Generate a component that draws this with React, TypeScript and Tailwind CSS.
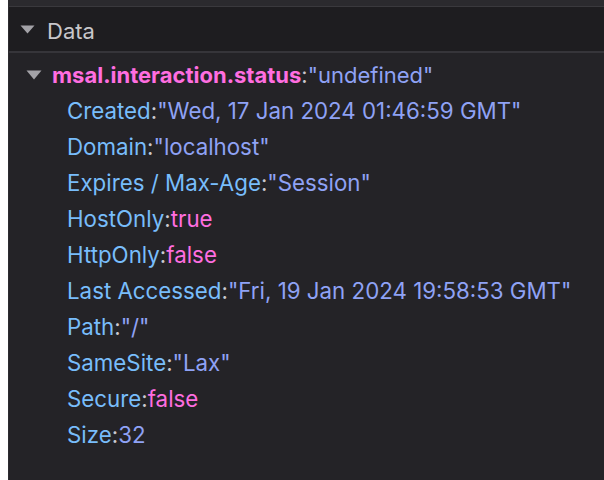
import React from 'react';

type Row = { k: string; v: string; kind: 'str' | 'bool' | 'num' };

const ROWS: Row[] = [
    { k: 'Created', v: '"Wed, 17 Jan 2024 01:46:59 GMT"', kind: 'str' },
    { k: 'Domain', v: '"localhost"', kind: 'str' },
    { k: 'Expires / Max-Age', v: '"Session"', kind: 'str' },
    { k: 'HostOnly', v: 'true', kind: 'bool' },
    { k: 'HttpOnly', v: 'false', kind: 'bool' },
    { k: 'Last Accessed', v: '"Fri, 19 Jan 2024 19:58:53 GMT"', kind: 'str' },
    { k: 'Path', v: '"/"', kind: 'str' },
    { k: 'SameSite', v: '"Lax"', kind: 'str' },
    { k: 'Secure', v: 'false', kind: 'bool' },
    { k: 'Size', v: '32', kind: 'num' },
];

function Caret({ color, w, h }: { color: string; w: number; h: number }) {
    return (
        <svg width={w} height={h} viewBox={`0 0 ${w} ${h}`} className="shrink-0">
            <path d={`M0.5 0.5 L${w - 0.5} 0.5 L${w / 2} ${h - 0.5} Z`} fill={color} />
        </svg>
    );
}

export default function App() {
    return (
        <div className="w-[604px] h-[480px] bg-white flex font-['Inter','Liberation_Sans',sans-serif]">
            <div className="w-[8px] shrink-0 bg-white" />
            <div className="flex-1 flex flex-col bg-[#242327] border-l border-[#2d2c30] overflow-hidden">
                {/* toolbar edge */}
                <div className="h-[7px] bg-[#2b2a2e] border-b border-[#3a393d]" />

                {/* section header */}
                <div className="h-[46px] bg-[#1e1d20] border-b-2 border-[#36353a] flex items-center gap-[12px] pl-[11px]">
                    <Caret color="#a3a2a7" w={15} h={9} />
                    <span className="text-[22px] text-[#c8c7cb] leading-[24px] mt-[4px]">Data</span>
                </div>

                {/* tree */}
                <div className="pt-[4px]">
                    <div className="h-[36px] flex items-center gap-[10px] pl-[17px]">
                        <Caret color="#a3a2a7" w={16} h={10} />
                        <span className="text-[22px] leading-[24px] whitespace-nowrap">
                            <span className="font-bold text-[#ff6ee0]">msal.interaction.status</span>
                            <span className="text-[#c9c8cf]">:</span>
                            <span className="text-[#8fa2f5]">"undefined"</span>
                        </span>
                    </div>
                    {ROWS.map(r => (
                        <div key={r.k} className="h-[36px] flex items-center pl-[58px]">
                            <span className="text-[22.3px] leading-[24px] whitespace-nowrap">
                                <span className="text-[#78bdfb]">{r.k}</span>
                                <span className="text-[#c9c8cf]">:</span>
                                <span className={r.kind === 'bool' ? 'text-[#ff6ee0]' : 'text-[#8fa2f5]'}>{r.v}</span>
                            </span>
                        </div>
                    ))}
                </div>
            </div>
        </div>
    );
}
